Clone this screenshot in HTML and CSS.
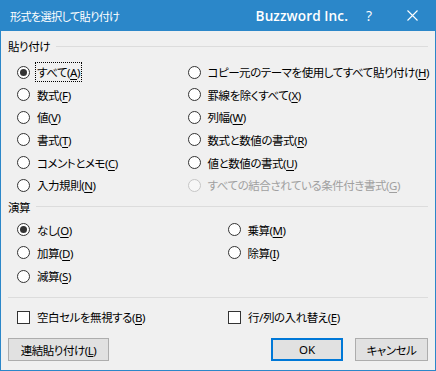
FILE: index.html
```html
<!DOCTYPE html>
<html lang="ja">
<head>
<meta charset="utf-8">
<link rel="stylesheet" href="styles.css">
</head>
<body>
<div class="window">
  <div class="titlebar">
    <span class="title">形式を選択して貼り付け</span>
    <span class="brand">Buzzword Inc.</span>
    <span class="help">?</span>
    <span class="close"><svg width="11" height="11" viewBox="0 0 11 11"><path d="M0.5 0.5L10.5 10.5M10.5 0.5L0.5 10.5" stroke="#fff" stroke-width="1.1" fill="none"/></svg></span>
  </div>
  <div class="content">
    <div class="group-head g1"><span>貼り付け</span><i class="rule"></i></div>
    <div class="grid paste">
      <label class="opt"><span class="radio on"></span><span class="txt focus">すべて(<u>A</u>)</span></label>
      <label class="opt"><span class="radio"></span><span class="txt">コピー元のテーマを使用してすべて貼り付け(<u>H</u>)</span></label>
      <label class="opt"><span class="radio"></span><span class="txt">数式(<u>F</u>)</span></label>
      <label class="opt"><span class="radio"></span><span class="txt">罫線を除くすべて(<u>X</u>)</span></label>
      <label class="opt"><span class="radio"></span><span class="txt">値(<u>V</u>)</span></label>
      <label class="opt"><span class="radio"></span><span class="txt">列幅(<u>W</u>)</span></label>
      <label class="opt"><span class="radio"></span><span class="txt">書式(<u>T</u>)</span></label>
      <label class="opt"><span class="radio"></span><span class="txt">数式と数値の書式(<u>R</u>)</span></label>
      <label class="opt"><span class="radio"></span><span class="txt">コメントとメモ(<u>C</u>)</span></label>
      <label class="opt"><span class="radio"></span><span class="txt">値と数値の書式(<u>U</u>)</span></label>
      <label class="opt"><span class="radio"></span><span class="txt">入力規則(<u>N</u>)</span></label>
      <label class="opt disabled"><span class="radio"></span><span class="txt">すべての結合されている条件付き書式(<u>G</u>)</span></label>
    </div>
    <div class="group-head g2"><span>演算</span><i class="rule"></i></div>
    <div class="grid ops">
      <label class="opt"><span class="radio on"></span><span class="txt">なし(<u>O</u>)</span></label>
      <label class="opt"><span class="radio"></span><span class="txt">乗算(<u>M</u>)</span></label>
      <label class="opt"><span class="radio"></span><span class="txt">加算(<u>D</u>)</span></label>
      <label class="opt"><span class="radio"></span><span class="txt">除算(<u>I</u>)</span></label>
      <label class="opt"><span class="radio"></span><span class="txt">減算(<u>S</u>)</span></label>
    </div>
    <div class="sep"></div>
    <div class="grid checks">
      <label class="opt"><span class="check"></span><span class="txt">空白セルを無視する(<u>B</u>)</span></label>
      <label class="opt"><span class="check"></span><span class="txt">行/列の入れ替え(<u>E</u>)</span></label>
    </div>
    <div class="buttons">
      <button class="btn link">連結貼り付け(<u>L</u>)</button>
      <span class="spacer"></span>
      <button class="btn ok">OK</button>
      <button class="btn">キャンセル</button>
    </div>
  </div>
</div>
</body>
</html>
```
FILE: styles.css
```css
* { box-sizing: border-box; }
html, body { margin: 0; padding: 0; }
body {
  width: 436px;
  height: 371px;
  overflow: hidden;
  font-family: "Noto Sans", "Noto Sans CJK JP", sans-serif;
  font-size: 11.5px;
  letter-spacing: -0.45px;
  font-feature-settings: "palt";
  color: #000;
  background: #f0f0f0;
}
.window {
  width: 436px;
  height: 371px;
  border: 1px solid #2b87c9;
  border-top: none;
  background: #f0f0f0;
  display: flex;
  flex-direction: column;
}
.titlebar {
  height: 31px;
  margin: 0 -1px;
  background: #2b87c9;
  color: #fff;
  display: flex;
  align-items: center;
  padding-left: 10px;
}
.title { font-size: 11.2px; flex: 1; letter-spacing: -0.7px; }
.brand {
  font-family: "Open Sans", "Liberation Sans", sans-serif;
  font-weight: 600;
  font-size: 13.6px;
  font-feature-settings: normal;
  letter-spacing: 0.1px;
}
.help {
  font-family: "Open Sans", sans-serif;
  font-size: 14px;
  letter-spacing: 0;
  margin-left: 18px;
  width: 10px;
}
.close { display: flex; margin-left: 31px; margin-right: 18px; }
.content {
  padding: 0 7px;
  display: flex;
  flex-direction: column;
}
.group-head {
  display: flex;
  align-items: center;
  height: 16px;
  gap: 6px;
}
.g1 { margin-top: 7px; }
.g2 { margin-top: 2px; }
.rule { flex: 1; height: 1px; background: #dcdcdc; }
.grid {
  display: grid;
}
.paste {
  margin-top: 6.7px;
  grid-template-columns: 170.5px 1fr;
  grid-auto-rows: 22.67px;
}
.ops {
  margin-top: 3.3px;
  grid-template-columns: 210.5px 1fr;
  grid-auto-rows: 23.33px;
}
.checks {
  margin-top: 8px;
  grid-template-columns: 211px 1fr;
  grid-auto-rows: 23px;
}
.opt {
  display: flex;
  align-items: center;
  padding-left: 9px;
  white-space: nowrap;
}
.radio {
  width: 13px;
  height: 13px;
  border: 1px solid #333;
  border-radius: 50%;
  background: #fff;
  display: flex;
  align-items: center;
  justify-content: center;
  flex: none;
}
.radio.on::after {
  content: "";
  width: 7px;
  height: 7px;
  border-radius: 50%;
  background: #333;
}
.check {
  width: 13px;
  height: 13px;
  border: 1px solid #333;
  background: #fff;
  flex: none;
}
.txt { padding: 1px 1px; border: 1px solid transparent; margin-left: 5px; }
.txt u { text-underline-offset: 2px; }
.focus { border: 1px dotted #000; }
.disabled .radio { border-color: #c6c6c6; background: #f7f7f7; }
.disabled .txt { color: #a0a0a0; }
.sep { margin-top: 8.7px; height: 1px; background: #dcdcdc; }
.buttons {
  margin-top: 9.5px;
  display: flex;
  gap: 12px;
  height: 23px;
}
.spacer { flex: 1; }
.btn {
  font: inherit;
  letter-spacing: inherit;
  font-feature-settings: "palt";
  height: 23px;
  padding: 0;
  background: #e1e1e1;
  border: 1px solid #adadad;
  color: #000;
  width: 73px;
}
.btn.link { width: 101px; }
.btn.ok { width: 72px; border: 2px solid #0078d7; letter-spacing: 0; }
```
